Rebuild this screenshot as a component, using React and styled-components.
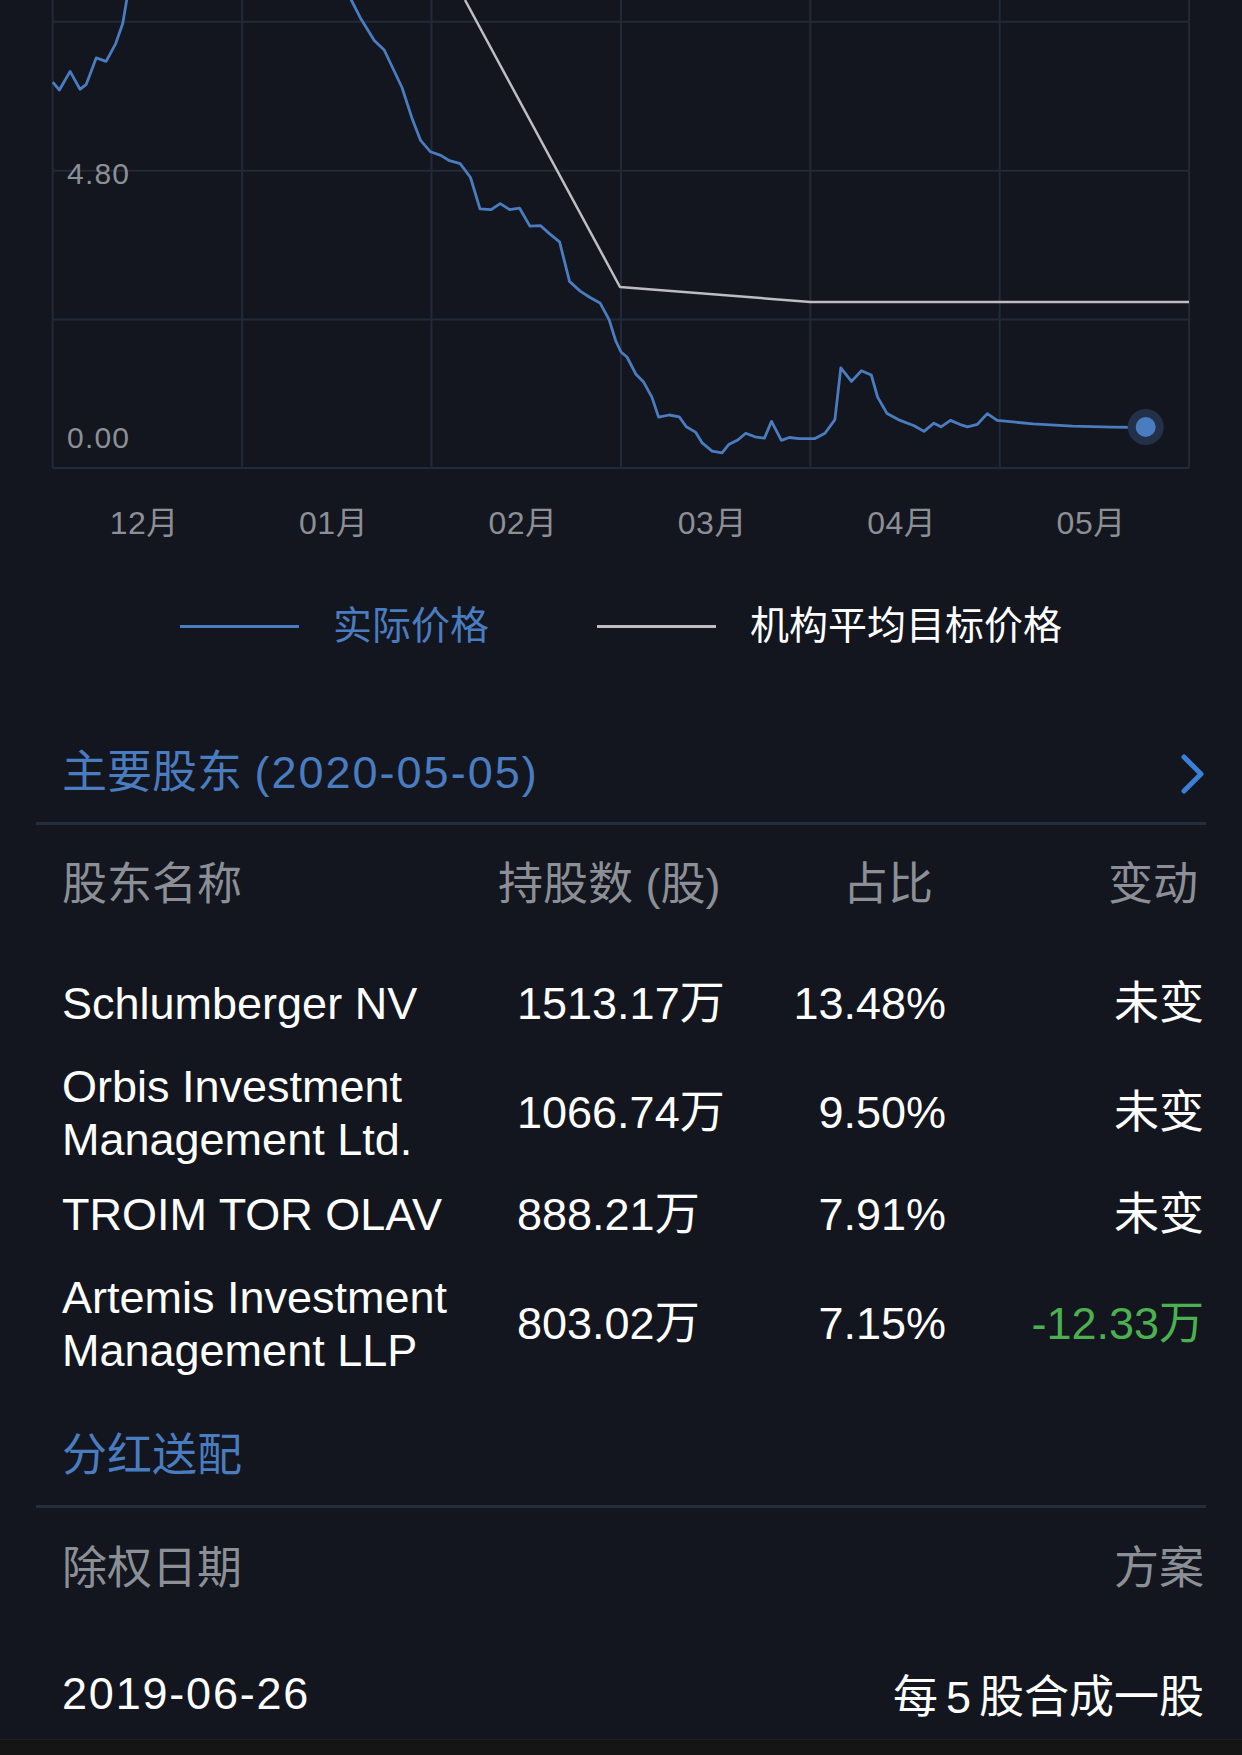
import styled, { createGlobalStyle } from "styled-components";

const GlobalStyle = createGlobalStyle`
  *, *::before, *::after {
    box-sizing: border-box;
  }
  html, body {
    margin: 0;
    padding: 0;
    background: #13161f;
  }
  body {
    font-family: "Liberation Sans", "Noto Sans CJK SC", sans-serif;
    -webkit-font-smoothing: antialiased;
  }
`;

const BLUE = "#4a7cc0";
const GRAY = "#8c8f96";
const GRID = "#222a38";

// price line, page coordinates (chart is scrolled, so it runs off the top)
const pricePoints = [
  [52.7, 82.1], [59.4, 90], [70.1, 71.4], [80, 89.3], [86.3, 84.3], [96.2, 57.9],
  [106.1, 61.4], [115.6, 43.9], [122.8, 23.2], [126.7, 0], [130, -20], [340, -20],
  [351.3, 0], [360.4, 17.9], [374.3, 40.4], [384.2, 50], [402, 87.5], [411.9, 117.9],
  [420.6, 140.4], [430.5, 151.8], [440.8, 155.4], [449.5, 160.7], [460.2, 163.6],
  [470.5, 177.5], [480, 208.9], [491.1, 209.6], [500.2, 203.6], [509.7, 209.6],
  [519.6, 208.2], [529.9, 226.1], [540.6, 225.7], [549.7, 233.9], [559.6, 241.8],
  [569.5, 281.4], [580.2, 291.1], [590.1, 297.5], [600, 302.9], [609.1, 319.6],
  [615.8, 341], [621, 352], [627, 357], [636, 374.3], [643.6, 382.1], [651.9, 397.1],
  [658.6, 417.1], [669.3, 415], [679.2, 416.8], [686.3, 426.8], [695.5, 432.1],
  [702.2, 442.9], [712.1, 451.1], [722, 452.9], [728.7, 444.6], [737.8, 440],
  [745.8, 433.2], [754.9, 436.8], [764.4, 438.2], [771.5, 421.4], [781.4, 440.4],
  [789.3, 437.5], [799.2, 438.6], [815, 438.6], [825, 433.2], [834.9, 419.6],
  [840.8, 367.9], [851.5, 381.4], [861.4, 370.7], [871.3, 375], [877.6, 397.1],
  [887.1, 413.6], [898.2, 419.6], [914.1, 425.7], [924, 431.4], [933.9, 423.2],
  [941, 426.8], [950.5, 420.4], [959.6, 424.3], [967.5, 426.8], [977.4, 424.3],
  [987.3, 413.6], [997.2, 420.4], [1032.9, 423.9], [1072.5, 426.1], [1112.1, 427.1],
  [1145.7, 427.5],
];

const targetPoints = [[465, 0], [620, 287], [810.3, 302], [1189, 302]];

const toPoints = (pts) => pts.map(([x, y]) => `${x},${y}`).join(" ");

const gridX = [52.7, 242.1, 431.5, 620.9, 810.3, 999.7, 1189.1];
const gridY = [21.8, 170.7, 319.6, 468];
const months = ["12月", "01月", "02月", "03月", "04月", "05月"];

const holders = [
  { name: "Schlumberger NV", shares: "1513.17万", ratio: "13.48%", change: "未变" },
  { name: "Orbis Investment Management Ltd.", shares: "1066.74万", ratio: "9.50%", change: "未变" },
  { name: "TROIM TOR OLAV", shares: "888.21万", ratio: "7.91%", change: "未变" },
  { name: "Artemis Investment Management LLP", shares: "803.02万", ratio: "7.15%", change: "-12.33万", down: true },
];

const Page = styled.div`
  position: relative;
  width: 1242px;
  height: 1755px;
  overflow: hidden;
  background: #13161f;
`;

const ChartSvg = styled.svg`
  display: block;
`;

const AxisLabelText = styled.text`
  font-family: "Liberation Sans", sans-serif;
  font-size: 30px;
  letter-spacing: 1.2px;
  fill: ${GRAY};
`;

const AxisRow = styled.div`
  display: flex;
  align-items: center;
  height: 104px;
  padding: 0 0 4px 53px;
`;

const AxisLabel = styled.div`
  width: 189.4px;
  padding-right: 7px;
  text-align: center;
  font-size: 32px;
  letter-spacing: 0.5px;
  color: ${GRAY};
`;

const Legend = styled.div`
  display: flex;
  justify-content: center;
  align-items: center;
  gap: 108px;
  height: 104px;
  padding-bottom: 9px;
`;

const LegendItem = styled.div`
  display: flex;
  align-items: center;
  gap: 34px;
  font-size: 39px;
  color: ${(p) => p.$color};
`;

const LegendLine = styled.span`
  display: block;
  width: 119px;
  height: 3px;
  margin-top: 9px;
  background: ${(p) => p.$color};
`;

const Section = styled.section`
  margin: ${(p) => p.$top}px 36px 0;
`;

const SectionHead = styled.div`
  display: flex;
  align-items: center;
  justify-content: space-between;
  height: 101px;
  padding: 0 2px 9px 26px;
  border-bottom: 3px solid #252d3b;
  font-size: 45px;
  color: ${BLUE};
`;

const HeadDate = styled.span`
  letter-spacing: 2px;
`;

const Chevron = styled.svg`
  display: block;
  margin-top: 10px;
`;

const Row = styled.div`
  display: grid;
  grid-template-columns: 436px 260px 188px 1fr;
  align-items: center;
  height: ${(p) => p.$height}px;
  padding: 0 2px ${(p) => p.$lift}px 26px;
  font-size: 45px;
  line-height: 53px;
`;

const Cell = styled.div`
  text-align: ${(p) => (p.$right ? "right" : "left")};
  padding-left: ${(p) => p.$padLeft || 0}px;
  padding-right: ${(p) => p.$padRight || 0}px;
  color: ${(p) => p.$color || "#ffffff"};
`;

const PlanRow = styled.div`
  display: flex;
  align-items: center;
  justify-content: space-between;
  height: ${(p) => p.$height}px;
  padding: 0 2px 7px 26px;
  font-size: 45px;
  color: ${(p) => p.$color || "#ffffff"};
`;

const DateText = styled.span`
  letter-spacing: 1.8px;
`;

const PlanDigit = styled.span`
  margin: 0 8px;
`;

const BottomBar = styled.div`
  position: absolute;
  left: 0;
  right: 0;
  bottom: 0;
  height: 16px;
  background: #151515;
  border-top: 1px solid #1f1f22;
`;

function PriceChart() {
  return (
    <ChartSvg width="1242" height="470" viewBox="0 0 1242 470">
      {gridX.map((x) => (
        <line key={x} x1={x} y1="0" x2={x} y2="468" stroke={GRID} strokeWidth="2" />
      ))}
      {gridY.map((y) => (
        <line key={y} x1="52.7" y1={y} x2="1189.1" y2={y} stroke={GRID} strokeWidth="2" />
      ))}
      <AxisLabelText x="67" y="183.5">4.80</AxisLabelText>
      <AxisLabelText x="67" y="448">0.00</AxisLabelText>
      <polyline
        points={toPoints(targetPoints)}
        fill="none"
        stroke="#bdbdc2"
        strokeWidth="2.5"
        strokeLinejoin="round"
      />
      <polyline
        points={toPoints(pricePoints)}
        fill="none"
        stroke={BLUE}
        strokeWidth="2.8"
        strokeLinejoin="round"
      />
      <circle cx="1145.7" cy="427" r="18" fill="#223048" />
      <circle cx="1145.7" cy="427" r="10" fill={BLUE} />
    </ChartSvg>
  );
}

export default function App() {
  return (
    <Page>
      <GlobalStyle />
      <PriceChart />
      <AxisRow>
        {months.map((m) => (
          <AxisLabel key={m}>{m}</AxisLabel>
        ))}
      </AxisRow>
      <Legend>
        <LegendItem $color={BLUE}>
          <LegendLine $color={BLUE} />
          实际价格
        </LegendItem>
        <LegendItem $color="#ffffff">
          <LegendLine $color="#bdbdc2" />
          机构平均目标价格
        </LegendItem>
      </Legend>

      <Section $top={46}>
        <SectionHead>
          <span>
            主要股东 <HeadDate>(2020-05-05)</HeadDate>
          </span>
          <Chevron width="24" height="40" viewBox="0 0 24 40">
            <polyline
              points="4,3 21,20 4,37"
              fill="none"
              stroke="#3c7fd6"
              strokeWidth="5"
              strokeLinecap="round"
              strokeLinejoin="round"
            />
          </Chevron>
        </SectionHead>
        <Row $height={129} $lift={11}>
          <Cell $color={GRAY}>股东名称</Cell>
          <Cell $color={GRAY}>持股数 (股)</Cell>
          <Cell $color={GRAY} $right $padRight={13}>占比</Cell>
          <Cell $color={GRAY} $right $padRight={6}>变动</Cell>
        </Row>
        {holders.map((h) => (
          <Row key={h.name} $height={105.5} $lift={6}>
            <Cell>{h.name}</Cell>
            <Cell $padLeft={19}>{h.shares}</Cell>
            <Cell $right>{h.ratio}</Cell>
            <Cell $right $color={h.down ? "#4cb050" : "#ffffff"}>{h.change}</Cell>
          </Row>
        ))}
      </Section>

      <Section $top={31}>
        <SectionHead>分红送配</SectionHead>
        <PlanRow $height={120} $color={GRAY}>
          <span>除权日期</span>
          <span>方案</span>
        </PlanRow>
        <PlanRow $height={138}>
          <DateText>2019-06-26</DateText>
          <span>
            每<PlanDigit>5</PlanDigit>股合成一股
          </span>
        </PlanRow>
      </Section>
      <BottomBar />
    </Page>
  );
}
